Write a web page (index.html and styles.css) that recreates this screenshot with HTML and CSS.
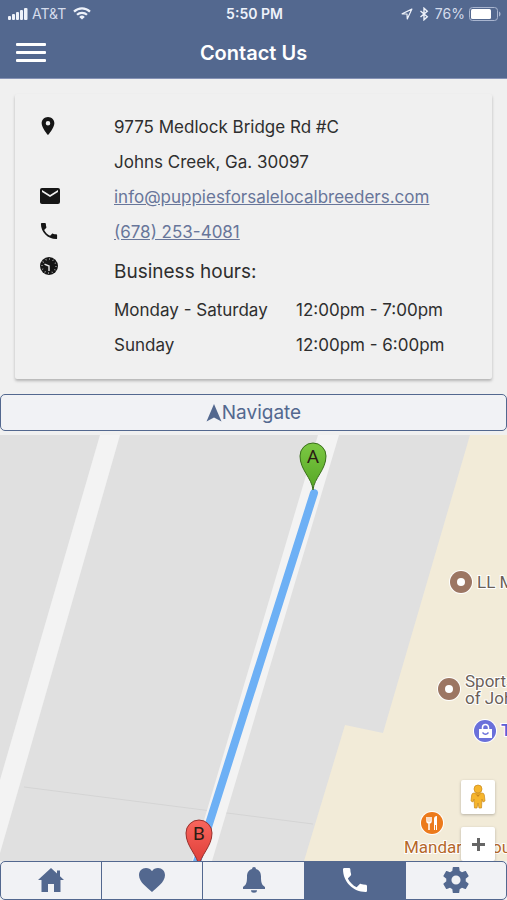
FILE: index.html
```html
<!DOCTYPE html>
<html lang="en">
<head>
    <meta charset="UTF-8">
    <meta name="viewport" content="width=device-width, initial-scale=1.0">
    <title>Contact Us</title>
    <link rel="stylesheet" href="styles.css">
</head>
<body>
    <header class="header">
        <div class="status-bar">
            <div class="status-left">
                <svg width="20" height="12" viewBox="0 0 20 12" fill="currentColor">
                    <rect x="0" y="8" width="3" height="4" rx="1" />
                    <rect x="4" y="6" width="3" height="6" rx="1" />
                    <rect x="8" y="4" width="3" height="8" rx="1" />
                    <rect x="12" y="2" width="3" height="10" rx="1" />
                    <rect x="16" y="0" width="3.5" height="12" rx="1" />
                </svg>
                <span class="carrier">AT&amp;T</span>
                <svg width="18" height="13" viewBox="0 0 18 13" fill="none" stroke="currentColor" stroke-width="2.2">
                    <path d="M1 4.6a11.5 11.5 0 0 1 16 0" />
                    <path d="M4 7.8a7.2 7.2 0 0 1 10 0" />
                    <path d="M9 12.6L6.2 9.9a4 4 0 0 1 5.6 0z" fill="currentColor" stroke="none" />
                </svg>
            </div>
            <span class="status-time">5:50 PM</span>
            <div class="status-right">
                <svg width="12" height="12" viewBox="0 0 13 13" fill="none" stroke="currentColor" stroke-width="1.3" stroke-linejoin="round">
                    <path d="M1.2 6.3L11.8 1.2 6.8 11.8 6.5 6.5z" />
                </svg>
                <svg class="bluetooth" width="10" height="14" viewBox="0 0 10 14" fill="none" stroke="currentColor" stroke-width="1.4">
                    <path d="M1.5 4L8.3 9.8 5 12.8V1.2L8.3 4.2 1.5 10" />
                </svg>
                <span class="battery-level">76%</span>
                <svg width="32" height="14" viewBox="0 0 32 14">
                    <rect x="0.5" y="0.5" width="28" height="13" rx="3" fill="none" stroke="#a9b5cf" />
                    <rect x="2" y="2" width="20" height="10" rx="1.5" fill="#fff" />
                    <path d="M30 4.5c2 .8 2 4.200 0 5z" fill="#a9b5cf" />
                </svg>
            </div>
        </div>
        <div class="title-bar">
            <button class="menu-button" type="button" aria-label="Menu">
                <span></span>
                <span></span>
                <span></span>
            </button>
            <h1 class="title">Contact Us</h1>
        </div>
    </header>

    <main class="main-content">
        <section class="card">
            <div class="row">
                <div class="row-icon">
                    <svg width="16" height="20" viewBox="4 1 16 22" fill="currentColor">
                        <path d="M12 2C8.100 2 5 5.100 5 9c0 5.200 7 13 7 13s7-7.800 7-13c0-3.900-3.100-7-7-7zm0 9.500a2.500 2.500 0 1 1 0-5 2.500 2.500 0 0 1 0 5z" />
                    </svg>
                </div>
                <div class="row-text">
                    <p>9775 Medlock Bridge Rd #C</p>
                    <p>Johns Creek, Ga. 30097</p>
                </div>
            </div>
            <div class="row">
                <div class="row-icon">
                    <svg width="20" height="20" viewBox="2 2 20 20" fill="currentColor">
                        <path d="M20 4H4a2 2 0 0 0-2 2v12c0 1.100.9 2 2 2h16a2 2 0 0 0 2-2V6a2 2 0 0 0-2-2zm0 4l-8 5-8-5V6l8 5 8-5z" />
                    </svg>
                </div>
                <div class="row-text">
                    <p><a class="contact-link" href="mailto:info@puppiesforsalelocalbreeders.com">info@puppiesforsalelocalbreeders.com</a></p>
                </div>
            </div>
            <div class="row">
                <div class="row-icon">
                    <svg width="18" height="20" viewBox="2 2 20 20" fill="currentColor">
                        <path d="M6.620 10.790c1.440 2.830 3.760 5.140 6.590 6.590l2.200-2.200c.27-.27.67-.36 1.020-.24 1.120.37 2.330.57 3.570.57.55 0 1 .45 1 1V20c0 .55-.45 1-1 1C10.610 21 3 13.390 3 4c0-.55.45-1 1-1h3.500c.55 0 1 .45 1 1 0 1.250.2 2.450.57 3.570.11.35.03.74-.25 1.020z" />
                    </svg>
                </div>
                <div class="row-text">
                    <p><a class="contact-link" href="tel:6782534081">(678) 253-4081</a></p>
                </div>
            </div>
            <div class="row">
                <div class="row-icon">
                    <svg width="18" height="20" viewBox="0 0 18 20">
                        <circle cx="9" cy="10" r="9" fill="#161616" />
                        <circle cx="9" cy="10" r="7" fill="none" stroke="#c4c4c4" stroke-width="1.4" stroke-dasharray="0.8 2.865" />
                        <path d="M4.500 8.200L9 10v5" fill="none" stroke="#e8e8e8" stroke-width="1.4" />
                    </svg>
                </div>
                <div class="row-text">
                    <h2 class="hours-title">Business hours:</h2>
                    <table class="hours">
                        <tr>
                            <td class="day">Monday - Saturday</td>
                            <td>12:00pm - 7:00pm</td>
                        </tr>
                        <tr>
                            <td class="day">Sunday</td>
                            <td>12:00pm - 6:00pm</td>
                        </tr>
                    </table>
                </div>
            </div>
        </section>

        <button class="navigate-button" type="button">
            <svg width="16" height="18" viewBox="0 0 16 18" fill="currentColor">
                <path d="M8 0l7.500 17.500L8 13.500.5 17.500z" />
            </svg>
            Navigate
        </button>

        <section class="map">
            <svg class="map-canvas" viewBox="0 0 507 426" preserveAspectRatio="xMidYMid slice">
                <defs>
                    <linearGradient id="pinGreen" x1="0" y1="0" x2="0" y2="1">
                        <stop offset="0" stop-color="#7cc843" />
                        <stop offset="1" stop-color="#55a624" />
                    </linearGradient>
                    <linearGradient id="pinRed" x1="0" y1="0" x2="0" y2="1">
                        <stop offset="0" stop-color="#f9665d" />
                        <stop offset="1" stop-color="#dc3a35" />
                    </linearGradient>
                </defs>
                <rect width="507" height="426" fill="#e0e0e0" />
                <path d="M24 352L313 389" stroke="#d4d4d4" fill="none" />
                <path d="M470 0L383 298 345 290 304 426H507V0z" fill="#f2ebd8" />

                <!-- roads -->
                <path d="M100 0h20L24 335 0 418v-73z" fill="#f3f3f3" />
                <path d="M318 0h21L212 426h-20z" fill="#f3f3f3" />
                <path d="M314 58L196 430" stroke="#6db0f5" stroke-width="8" stroke-linecap="round" />

                <!-- places -->
                <g class="place">
                    <circle cx="461" cy="147" r="12" fill="#fff" />
                    <circle cx="461" cy="147" r="11" fill="#9c7663" />
                    <circle cx="461" cy="147" r="4" fill="#fff" />
                    <text x="477" y="153">LL Medical</text>
                    <circle cx="449" cy="254" r="12" fill="#fff" />
                    <circle cx="449" cy="254" r="11" fill="#9c7663" />
                    <circle cx="449" cy="254" r="4" fill="#fff" />
                    <text x="465" y="252">Sports</text>
                    <text x="465" y="269">of Johns</text>
                </g>
                <g class="place place-shop">
                    <circle cx="485" cy="296" r="12" fill="#fff" />
                    <circle cx="485" cy="296" r="11" fill="#6a70da" />
                    <path d="M479 294h13v9h-13z" fill="#fff" />
                    <path d="M482.500 294v-1.500a3 3 0 0 1 6 0V294" fill="none" stroke="#fff" stroke-width="1.5" />
                    <path d="M482.500 297.500q3 3.500 6 0" fill="none" stroke="#6a70da" stroke-width="1.4" />
                    <text x="501" y="301">The</text>
                </g>
                <g class="place place-food">
                    <circle cx="432" cy="388" r="12" fill="#fff" />
                    <circle cx="432" cy="388" r="11" fill="#ec7a1c" />
                    <path d="M427 382v4q0 2 2 2t2-2v-4M429 382v13" fill="none" stroke="#fff" stroke-width="1.5" />
                    <path d="M434 395v-11q0-3 3-3v14h-1v-5h-1v5z" fill="#fff" />
                    <text x="404" y="418">Mandarin House</text>
                </g>

                <!-- route ends -->
                <g class="pin">
                    <path d="M313 55c-1-12-13-20-13-34a13 13 0 0 1 26 0c0 14-12 22-13 34z" fill="url(#pinGreen)" stroke="#3a6f1b" />
                    <text x="313" y="28">A</text>
                </g>
                <g class="pin">
                    <path d="M199 432c-1-12-13-20-13-34a13 13 0 0 1 26 0c0 14-12 22-13 34z" fill="url(#pinRed)" stroke="#98302c" />
                    <text x="199" y="405">B</text>
                </g>
            </svg>
            <div class="map-controls">
                <button class="map-button" type="button" aria-label="Street View">
                    <svg width="16" height="26" viewBox="0 0 16 26">
                        <path d="M4 9h8q2 0 2.300 2l.7 6-2 1-1-3-.5 9H9l-1-5-1 5H4.500L4 15l-1 3-2-1 .7-6Q2 9 4 9z" fill="#f6b52c" stroke="#c98a1c" stroke-width="0.7" />
                        <circle cx="8" cy="5" r="4" fill="#f6b52c" stroke="#c98a1c" stroke-width="0.7" />
                        <path d="M5 9.500q3 2.500 6 0L8 13z" fill="#c9851a" />
                    </svg>
                </button>
                <button class="map-button" type="button" aria-label="Zoom in">
                    <svg width="13" height="13" viewBox="0 0 13 13" fill="none" stroke="#666" stroke-width="3">
                        <path d="M6.500 0v13M0 6.500h13" />
                    </svg>
                </button>
            </div>
        </section>
    </main>

    <nav class="tabs">
        <a class="tab" href="#home" aria-label="Home">
            <svg width="26" height="24" viewBox="0 0 26 24" fill="currentColor">
                <path d="M13 0L0 12h3.500v12h6.500v-8h6v8h6.500V12H26l-4-3.700V2.500h-3v3z" />
            </svg>
        </a>
        <a class="tab" href="#favorites" aria-label="Favorites">
            <svg width="26" height="24" viewBox="0 0 26 24" fill="currentColor">
                <path d="M13 24C9 20 0 14.500 0 7.300 0 3 3 0 7 0c2.500 0 4.700 1.200 6 3.200C14.300 1.200 16.500 0 19 0c4 0 7 3 7 7.300C26 14.500 17 20 13 24z" />
            </svg>
        </a>
        <a class="tab" href="#alerts" aria-label="Alerts">
            <svg width="24" height="26" viewBox="0 0 24 26" fill="currentColor">
                <path d="M12 0a2 2 0 0 1 2 2c3.500 1 5 4 5 7.500 0 6 .5 8 4 10.500v2H1v-2c3.500-2.500 4-4.500 4-10.500C5 6 6.500 3 10 2a2 2 0 0 1 2-2zM9 23.200h6a3 2.500 0 0 1-6 0z" />
            </svg>
        </a>
        <a class="tab active" href="#contact" aria-label="Contact">
            <svg width="24" height="24" viewBox="3 3 18 18" fill="currentColor">
                <path d="M6.620 10.790c1.440 2.830 3.760 5.140 6.590 6.590l2.200-2.200c.27-.27.67-.36 1.020-.24 1.120.37 2.330.57 3.570.57.55 0 1 .45 1 1V20c0 .55-.45 1-1 1C10.610 21 3 13.390 3 4c0-.55.45-1 1-1h3.500c.55 0 1 .45 1 1 0 1.250.2 2.450.57 3.570.11.35.03.74-.25 1.020z" />
            </svg>
        </a>
        <a class="tab" href="#settings" aria-label="Settings">
            <svg width="26" height="26" viewBox="2 2 20 20" fill="currentColor">
                <path d="M19.430 12.980c.04-.32.07-.64.07-.98s-.03-.66-.07-.98l2.110-1.650c.19-.15.24-.42.12-.64l-2-3.460c-.12-.22-.39-.3-.61-.22l-2.490 1c-.52-.4-1.080-.73-1.690-.98l-.38-2.650A.488.488 0 0 0 14 2h-4c-.25 0-.46.18-.49.42l-.38 2.650c-.61.25-1.170.59-1.690.98l-2.490-1c-.23-.09-.49 0-.61.22l-2 3.460c-.13.22-.07.49.12.64l2.110 1.650c-.04.32-.07.65-.07.98s.03.66.07.98l-2.110 1.650c-.19.15-.24.42-.12.64l2 3.460c.12.22.39.3.61.22l2.490-1c.52.4 1.080.73 1.690.98l.38 2.650c.03.24.24.42.49.42h4c.25 0 .46-.18.49-.42l.38-2.650c.61-.25 1.170-.59 1.690-.98l2.490 1c.23.09.49 0 .61-.22l2-3.460c.12-.22.07-.49-.12-.64zM12 15.500a3.500 3.500 0 1 1 0-7 3.500 3.500 0 0 1 0 7z" />
            </svg>
        </a>
    </nav>
</body>
</html>
```

FILE: styles.css
```css
* {
    box-sizing: border-box;
}

body {
    margin: 0;
    min-height: 100vh;
    display: flex;
    flex-direction: column;
    font-family: Inter, Roboto, sans-serif;
    font-size: 17px;
    background-color: #f0f0f0;
    color: #2e2e2e;
}

svg {
    display: block;
    flex-shrink: 0;
}

/* Header */
.header {
    background-color: #53688f;
    color: white;
    border-bottom: 1px solid #8592b5;
}

.status-bar {
    display: grid;
    grid-template-columns: 1fr auto 1fr;
    align-items: center;
    height: 27px;
    padding: 0 6px 0 8px;
    font-size: 14px;
    color: #eef2fa;
}

.status-left,
.status-right {
    display: flex;
    align-items: center;
    gap: 4px;
}

.status-right {
    justify-content: flex-end;
}

.carrier,
.battery-level {
    color: #d5dcec;
}

.carrier {
    margin-right: 3px;
}

.bluetooth {
    margin: 0 2px;
}

.status-time {
    font-weight: 600;
}

.title-bar {
    display: grid;
    grid-template-columns: 1fr auto 1fr;
    align-items: center;
    height: 51px;
    padding: 0 16px;
}

.menu-button {
    display: flex;
    flex-direction: column;
    gap: 5px;
    width: 30px;
    padding: 0;
    border: none;
    background: none;
    cursor: pointer;
}

.menu-button span {
    width: 100%;
    height: 3px;
    border-radius: 1px;
    background-color: white;
}

.title {
    margin: 0;
    font-size: 20px;
    font-weight: 600;
}

/* Contact card */
.main-content {
    flex: 1;
    display: flex;
    flex-direction: column;
}

.card {
    margin: 15px;
    padding: 16px 25px;
    border-radius: 2px;
    box-shadow: 0 2px 3px rgba(0, 0, 0, 0.25);
}

.row {
    display: flex;
}

.row-icon {
    width: 74px;
    padding-top: 6px;
    color: #161616;
}

.row-text {
    flex: 1;
    line-height: 35px;
}

.row-text p {
    margin: 0;
}

.contact-link {
    color: #68769a;
}

.hours-title {
    margin: 0;
    font-size: 19px;
    font-weight: 400;
    line-height: 43px;
}

.hours {
    border-collapse: collapse;
}

.hours td {
    padding: 0;
}

.hours .day {
    width: 182px;
}

.navigate-button {
    display: flex;
    align-items: center;
    justify-content: center;
    width: 100%;
    height: 37px;
    margin-bottom: 4px;
    padding: 0;
    border: 1px solid #53688f;
    border-radius: 5px;
    background-color: #f1f2f5;
    color: #53688f;
    font-family: inherit;
    font-size: 19px;
    cursor: pointer;
}

/* Map */
.map {
    flex: 1;
    position: relative;
    min-height: 300px;
    overflow: hidden;
}

.map-canvas {
    position: absolute;
    inset: 0;
    width: 100%;
    height: 100%;
}

.place {
    font-family: Roboto, sans-serif;
    font-size: 17px;
    fill: #6b5f58;
}

.place text {
    stroke: white;
    stroke-width: 2px;
    paint-order: stroke;
}

.place-shop {
    font-weight: 500;
    fill: #5b61d6;
}

.place-food {
    fill: #b5672a;
}

.pin {
    font-family: Roboto, sans-serif;
    font-size: 19px;
    text-anchor: middle;
    fill: #2b1d14;
}

.map-controls {
    position: absolute;
    right: 12px;
    bottom: 0;
    display: flex;
    flex-direction: column;
    gap: 13px;
}

.map-button {
    display: flex;
    align-items: center;
    justify-content: center;
    width: 34px;
    height: 34px;
    padding: 0;
    border: none;
    border-radius: 2px;
    background-color: white;
    box-shadow: 0 1px 3px rgba(0, 0, 0, 0.25);
    cursor: pointer;
}

/* Bottom tabs */
.tabs {
    display: flex;
    height: 39px;
    border: 1px solid #53688f;
    border-radius: 5px;
    background-color: #f1f2f5;
    overflow: hidden;
}

.tab {
    flex: 1;
    display: flex;
    align-items: center;
    justify-content: center;
    padding-bottom: 2px;
    color: #53688f;
}

.tab + .tab {
    border-left: 1px solid #53688f;
}

.tab.active {
    background-color: #53688f;
    color: white;
}
```
